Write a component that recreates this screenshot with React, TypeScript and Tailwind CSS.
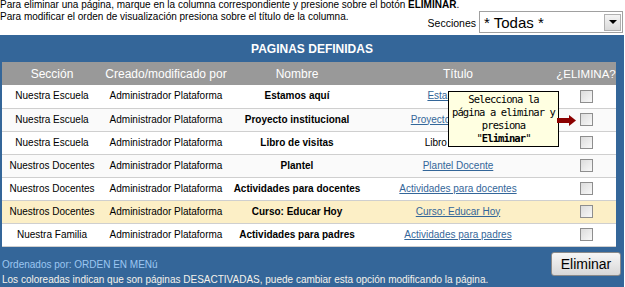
import React from "react";

type Fila = {
  seccion: string;
  nombre: string;
  titulo: string;
  enlace: boolean;
  inactiva?: boolean;
};

const filas: Fila[] = [
  { seccion: "Nuestra Escuela", nombre: "Estamos aquí", titulo: "Estamos aquí", enlace: true },
  { seccion: "Nuestra Escuela", nombre: "Proyecto institucional", titulo: "Proyecto institucional", enlace: true },
  { seccion: "Nuestra Escuela", nombre: "Libro de visitas", titulo: "Libro de visitas", enlace: false },
  { seccion: "Nuestros Docentes", nombre: "Plantel", titulo: "Plantel Docente", enlace: true },
  { seccion: "Nuestros Docentes", nombre: "Actividades para docentes", titulo: "Actividades para docentes", enlace: true },
  { seccion: "Nuestros Docentes", nombre: "Curso: Educar Hoy", titulo: "Curso: Educar Hoy", enlace: true, inactiva: true },
  { seccion: "Nuestra Familia", nombre: "Actividades para padres", titulo: "Actividades para padres", enlace: true },
];

function Casilla() {
  return (
    <span className="inline-block w-[13px] h-[13px] border border-[#8e8e8e] bg-gradient-to-br from-[#dcdcdc] to-[#f8f8f8] align-middle" />
  );
}

export default function App() {
  return (
    <div className="w-[625px] h-[287px] bg-white overflow-hidden text-[10px] leading-[12px] text-black font-['Liberation_Sans',Arial,sans-serif]">
      <div className="-mt-[1px]">
        <p>
          Para eliminar una página, marque en la columna correspondiente y presione sobre el botón{" "}
          <b>ELIMINAR</b>.
        </p>
        <p>Para modificar el orden de visualización presiona sobre el título de la columna.</p>
      </div>
      <div className="flex justify-end items-center -mt-[12px] h-[22px] pr-[2px]">
        <span className="text-[10.5px] mr-[3px] mt-[2px]">Secciones</span>
        <div className="w-[144px] h-[22px] border border-[#a0a0a0] flex items-center justify-between pl-[4px] pr-[1px]">
          <span className="text-[15px] leading-none">* Todas *</span>
          <span className="w-[17px] h-[17px] border border-[#b0b0b0] bg-gradient-to-b from-[#f4f4f4] to-[#dadada] flex items-center justify-center">
            <span className="w-0 h-0 border-l-[4px] border-r-[4px] border-t-[4px] border-l-transparent border-r-transparent border-t-black" />
          </span>
        </div>
      </div>

      <div className="mt-[2px] w-[624px] h-[252px] bg-[#346699] pl-[2px] pr-[8px]">
        <div className="h-[27px] flex items-center justify-center pl-[6px] text-white font-bold text-[12px]">
          PAGINAS DEFINIDAS
        </div>
        <div className="relative">
          <table className="table-fixed w-full border-collapse">
            <colgroup>
              <col className="w-[100px]" />
              <col className="w-[128px]" />
              <col className="w-[134px]" />
              <col className="w-[188px]" />
              <col className="w-[64px]" />
            </colgroup>
            <thead>
              <tr className="bg-[#999999] text-white text-[12px] h-[23px]">
                <th className="font-normal">Sección</th>
                <th className="font-normal">Creado/modificado por</th>
                <th className="font-normal">Nombre</th>
                <th className="font-normal">Título</th>
                <th className="font-normal pl-[4px] text-[11.5px]">¿ELIMINA?</th>
              </tr>
            </thead>
            <tbody>
              {filas.map((f, i) => (
                <tr
                  key={i}
                  className={
                    "h-[23px] border-b border-[#cfcfcf] text-center " +
                    (f.inactiva ? "bg-[#fcefc6]" : i % 2 === 1 ? "bg-[#fafafa]" : "bg-white")
                  }
                >
                  <td>{f.seccion}</td>
                  <td>Administrador Plataforma</td>
                  <td className="font-bold">{f.nombre}</td>
                  <td>
                    {f.enlace ? (
                      <span className="text-[#336699] underline">{f.titulo}</span>
                    ) : (
                      f.titulo
                    )}
                  </td>
                  <td className="pl-[4px]">
                    <Casilla />
                  </td>
                </tr>
              ))}
            </tbody>
          </table>

          {/* ayuda */}
          <div className="absolute left-[446px] top-[29px] w-[111px] h-[56px] bg-[#ffffe1] border border-black flex flex-col items-center justify-center font-['DejaVu_Sans_Mono',monospace] text-[10.5px] leading-[13px] tracking-[-0.9px]">
            <span>Selecciona la</span>
            <span>página a eliminar y</span>
            <span>presiona</span>
            <span>
              "<b>Eliminar</b>"
            </span>
          </div>
          <svg
            className="absolute left-[555px] top-[53px]"
            width="19"
            height="11"
            viewBox="0 0 19 11"
          >
            <rect x="0" y="3" width="12" height="5" fill="#8b0000" />
            <polygon points="12,0 19,5.5 12,11" fill="#8b0000" />
          </svg>
        </div>

        <div className="flex justify-between items-start">
          <div className="pt-[10px] text-[10px] leading-[15px]">
            <p className="text-[#9cc6f2]">Ordenados por: ORDEN EN MENú</p>
            <p className="text-[#f6f2ea]">
              Los coloreadas indican que son páginas DESACTIVADAS, puede cambiar esta opción modificando la página.
            </p>
          </div>
          <button className="mt-[5px] -mr-[5px] w-[70px] h-[24px] rounded-[3px] border border-[#8a8a8a] bg-gradient-to-b from-[#f6f6f6] to-[#d8d8d8] text-[14px] text-black leading-none">
            Eliminar
          </button>
        </div>
      </div>
    </div>
  );
}
